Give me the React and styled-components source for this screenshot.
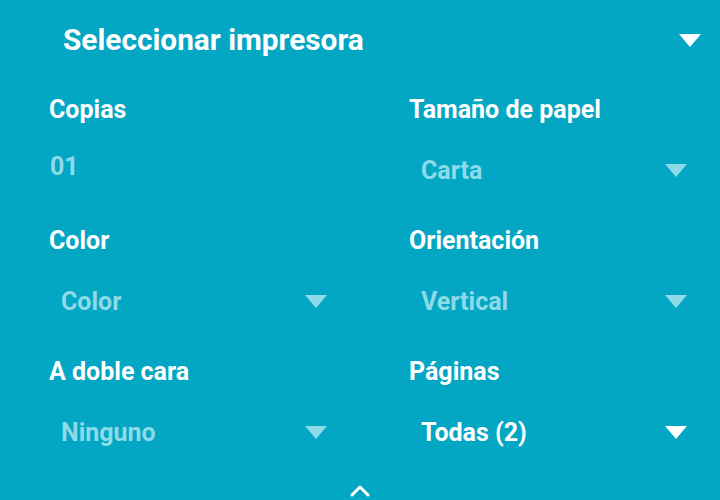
import React from "react";
import styled, { createGlobalStyle } from "styled-components";

const GlobalStyle = createGlobalStyle`
  html, body {
    margin: 0;
    padding: 0;
    background: #03a6c3;
  }
  body {
    font-family: Roboto, "Noto Sans", sans-serif;
  }
`;

const Screen = styled.div`
  width: 720px;
  height: 500px;
  background: #03a6c3;
  overflow: hidden;
  display: flex;
  flex-direction: column;
`;

const Header = styled.div`
  height: 80px;
  display: flex;
  align-items: center;
  justify-content: space-between;
  padding: 0 19px 0 63px;
`;

const Title = styled.div`
  color: #ffffff;
  font-size: 29.8px;
  font-weight: 700;
  margin-top: -1px;
`;

const Triangle = styled.span`
  width: 0;
  height: 0;
  border-left: 11px solid transparent;
  border-right: 11px solid transparent;
  border-top: 13px solid ${(p) => (p.$dim ? "#8ddae8" : "#ffffff")};
  display: inline-block;
`;

const Grid = styled.div`
  display: grid;
  grid-template-columns: 360px 360px;
  grid-auto-rows: 131px;
  padding-top: 10px;
`;

const Field = styled.div`
  display: flex;
  flex-direction: column;
  padding-left: 49px;
  padding-right: 33px;
`;

const Label = styled.div`
  color: #ffffff;
  font-size: 25px;
  font-weight: 700;
  height: 40px;
  line-height: 40px;
`;

const ValueRow = styled.div`
  display: flex;
  align-items: center;
  justify-content: space-between;
  height: 40px;
  margin-top: ${(p) => (p.$plain ? "16px" : "20px")};
  padding-left: ${(p) => (p.$plain ? "1px" : "12px")};
`;

const Value = styled.span`
  color: ${(p) => (p.$bright ? "#ffffff" : "#8ddae8")};
  font-size: 25px;
  font-weight: 700;
`;

const Footer = styled.div`
  flex: 1;
  display: flex;
  justify-content: center;
  align-items: flex-end;
  padding-bottom: 3px;
`;

const fields = [
  { label: "Copias", value: "01", plain: true },
  { label: "Tamaño de papel", value: "Carta" },
  { label: "Color", value: "Color" },
  { label: "Orientación", value: "Vertical" },
  { label: "A doble cara", value: "Ninguno" },
  { label: "Páginas", value: "Todas (2)", bright: true },
];

export default function App() {
  return (
    <>
      <GlobalStyle />
      <Screen>
        <Header>
          <Title>Seleccionar impresora</Title>
          <Triangle />
        </Header>
        <Grid>
          {fields.map((f) => (
            <Field key={f.label}>
              <Label>{f.label}</Label>
              <ValueRow $plain={f.plain}>
                <Value $bright={f.bright}>{f.value}</Value>
                {!f.plain && <Triangle $dim={!f.bright} />}
              </ValueRow>
            </Field>
          ))}
        </Grid>
        <Footer>
          <svg width="22" height="14" viewBox="0 0 22 14">
            <path
              d="M3 12 L11 4 L19 12"
              fill="none"
              stroke="#ffffff"
              strokeWidth="3"
              strokeLinecap="round"
              strokeLinejoin="round"
            />
          </svg>
        </Footer>
      </Screen>
    </>
  );
}
